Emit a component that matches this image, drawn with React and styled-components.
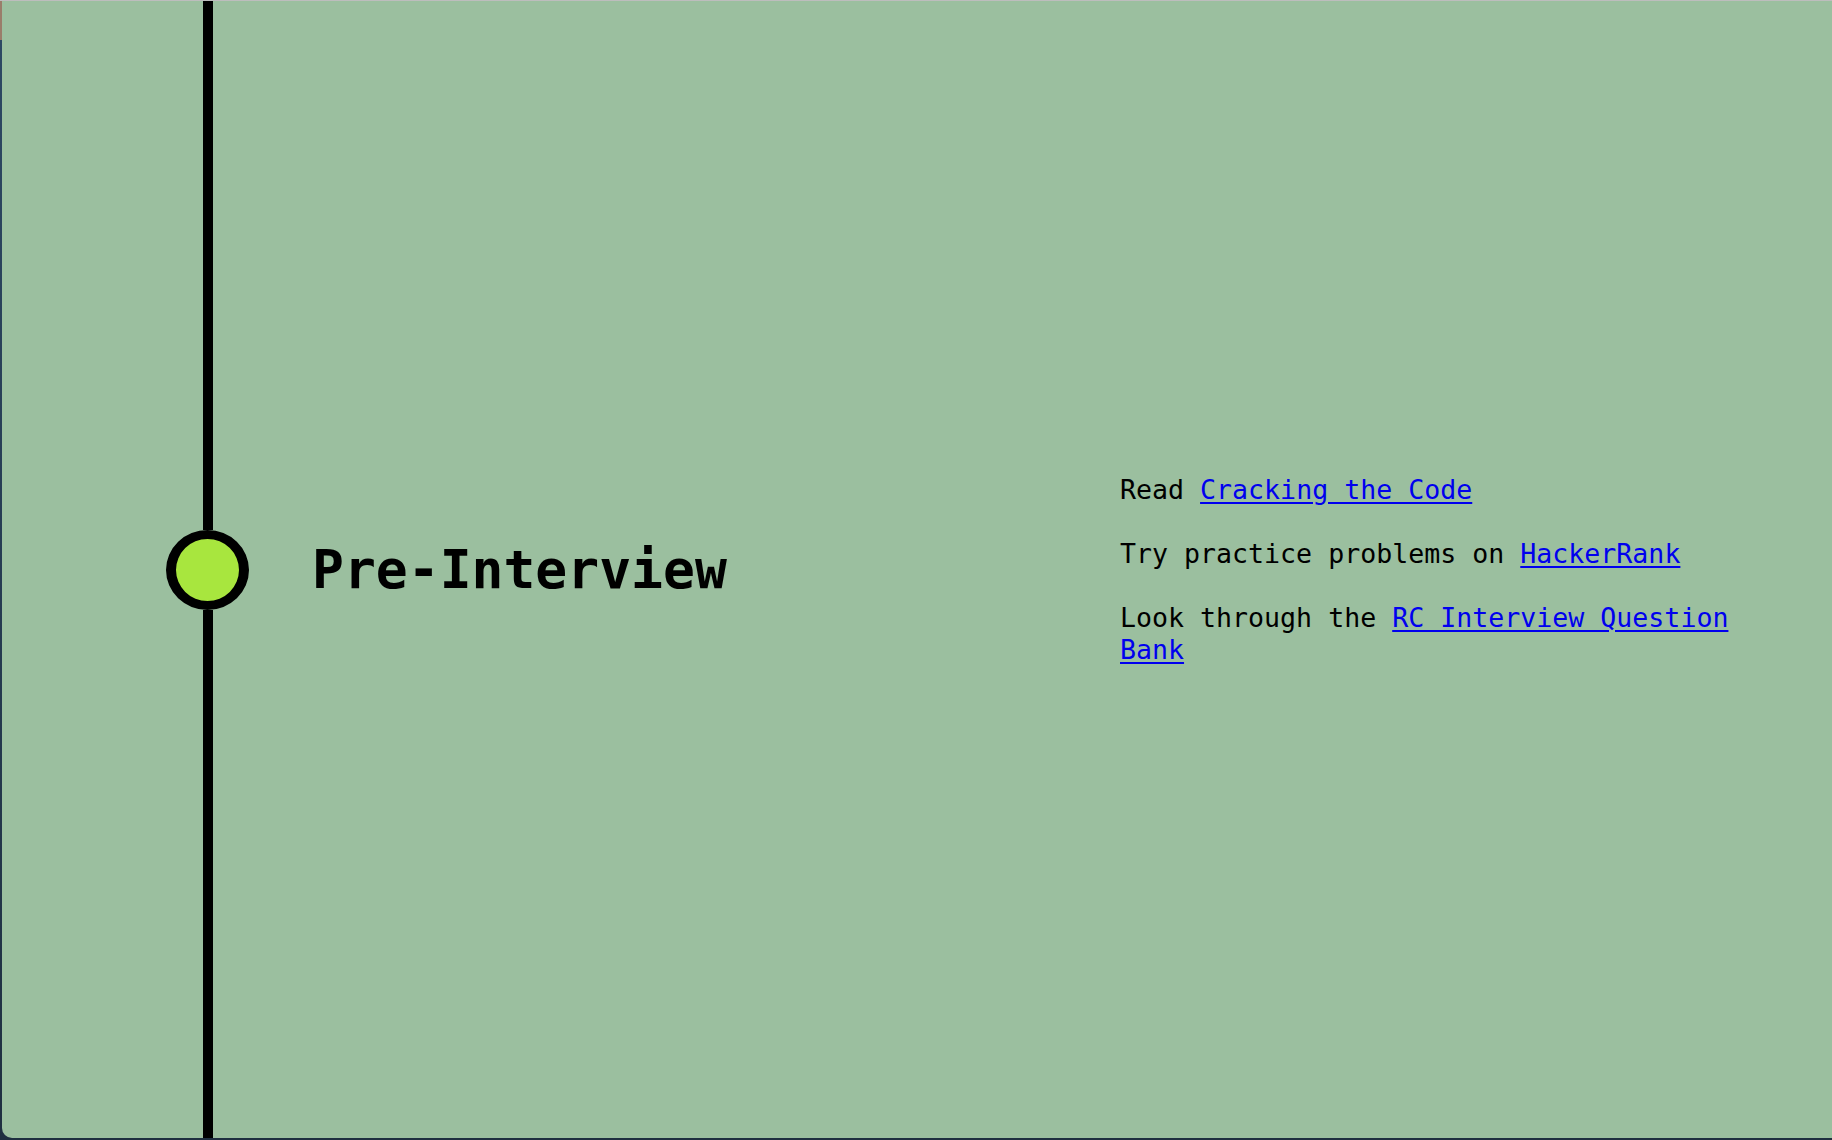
import styled, { createGlobalStyle } from 'styled-components';

const GlobalStyle = createGlobalStyle`
  html, body {
    margin: 0;
    padding: 0;
  }

  body {
    width: 1832px;
    height: 1140px;
    overflow: hidden;
    background: linear-gradient(to bottom, #9a7d6a 0, #9a7d6a 40px, #2d4863 40px, #1f2f40 100%);
    font-family: "DejaVu Sans Mono", "Liberation Mono", monospace;
  }
`;

const TopEdge = styled.div`
  height: 1px;
  background: #bdbdbd;
`;

const Frame = styled.main`
  display: flex;
  align-items: center;
  height: 1137px;
  margin-left: 2px;
  background: #9bbf9f;
  border-bottom-left-radius: 10px;
  color: #000;
`;

const Rail = styled.div`
  display: flex;
  flex-direction: column;
  align-items: center;
  align-self: stretch;
  width: 83px;
  margin-left: 164px;
`;

const Line = styled.div`
  flex: 1;
  width: 10px;
  background: #000;
`;

const Node = styled.div`
  box-sizing: border-box;
  width: 83px;
  height: 80px;
  border: 10px solid #000;
  border-top-width: 9px;
  border-bottom-width: 9px;
  border-radius: 50%;
  background: #a8e63e;
`;

const Title = styled.h1`
  flex: 1;
  margin: 0 0 0 63px;
  font-size: 53px;
  font-weight: bold;
  line-height: 64px;
  letter-spacing: 0;
`;

const Steps = styled.div`
  display: flex;
  flex-direction: column;
  gap: 32px;
  width: 640px;
  margin-right: 72px;
`;

const Step = styled.p`
  margin: 0;
  font-size: 26.6px;
  line-height: 32px;
`;

const Link = styled.a`
  color: #0000ee;
  text-decoration: underline;
  text-underline-offset: 3px;
`;

const steps = [
  { text: 'Read ', link: 'Cracking the Code' },
  { text: 'Try practice problems on ', link: 'HackerRank' },
  { text: 'Look through the ', link: 'RC Interview Question Bank' }
];

const App = () => (
  <>
    <GlobalStyle />
    <TopEdge />
    <Frame>
      <Rail>
        <Line />
        <Node />
        <Line />
      </Rail>
      <Title>Pre-Interview</Title>
      <Steps>
        {steps.map((step, i) => (
          <Step key={i}>
            {step.text}
            <Link href="#">{step.link}</Link>
          </Step>
        ))}
      </Steps>
    </Frame>
  </>
);

export default App;
